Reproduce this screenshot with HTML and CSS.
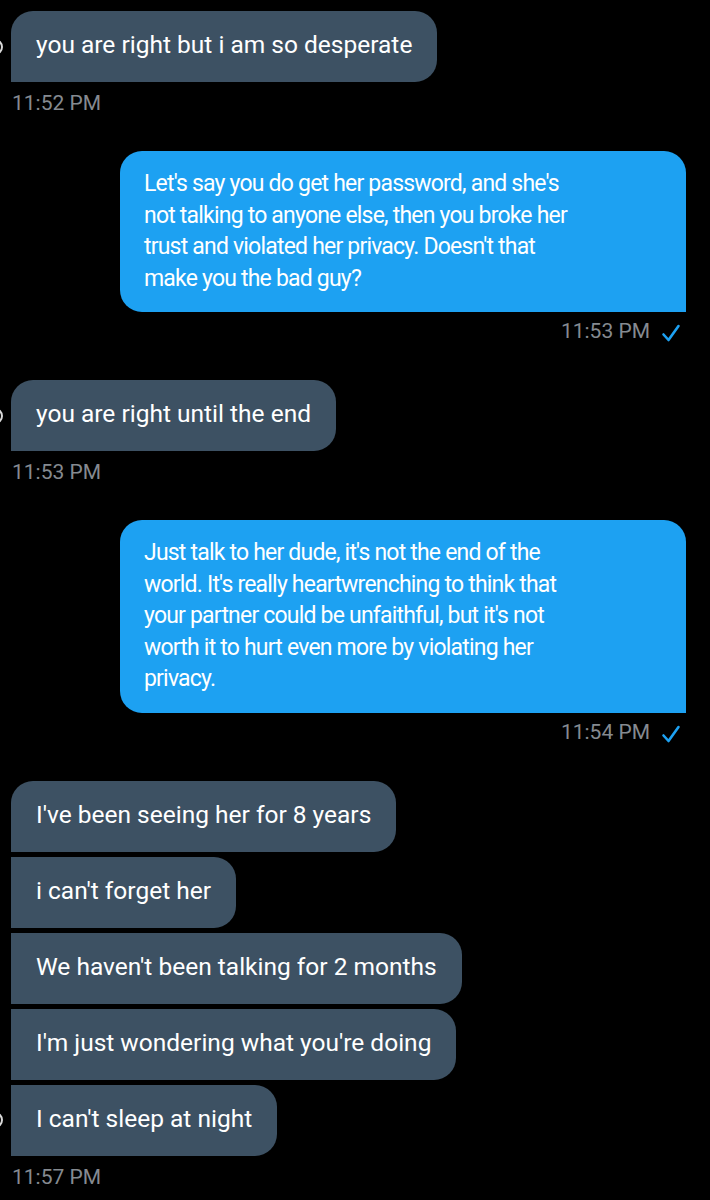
FILE: index.html
```html
<!DOCTYPE html>
<html lang="en">
<head>
<meta charset="utf-8">
<title>Messages</title>
<link rel="stylesheet" href="styles.css">
</head>
<body>
<main class="chat">
  <section class="group recv">
    <div class="row">
      <span class="avatar on"><span class="avatar-img"></span></span>
      <div class="bubble gray first last">you are right but i am so desperate</div>
    </div>
    <div class="time">11:52 PM</div>
  </section>

  <section class="group sent">
    <div class="row">
      <div class="bubble blue">Let's say you do get her password, and she's<br>not talking to anyone else, then you broke her<br>trust and violated her privacy. Doesn't that<br>make you the bad guy?</div>
    </div>
    <div class="time">11:53 PM
      <svg class="check" viewBox="0 0 20 20" width="20" height="20" aria-hidden="true"><path d="M2.5 11.5 L7.5 17 L17.5 3" fill="none" stroke="#1da1f2" stroke-width="2.6" stroke-linecap="round" stroke-linejoin="round"/></svg>
    </div>
  </section>

  <section class="group recv">
    <div class="row">
      <span class="avatar on"><span class="avatar-img"></span></span>
      <div class="bubble gray first last">you are right until the end</div>
    </div>
    <div class="time">11:53 PM</div>
  </section>

  <section class="group sent">
    <div class="row">
      <div class="bubble blue">Just talk to her dude, it's not the end of the<br>world. It's really heartwrenching to think that<br>your partner could be unfaithful, but it's not<br>worth it to hurt even more by violating her<br>privacy.</div>
    </div>
    <div class="time">11:54 PM
      <svg class="check" viewBox="0 0 20 20" width="20" height="20" aria-hidden="true"><path d="M2.5 11.5 L7.5 17 L17.5 3" fill="none" stroke="#1da1f2" stroke-width="2.6" stroke-linecap="round" stroke-linejoin="round"/></svg>
    </div>
  </section>

  <section class="group recv">
    <div class="row">
      <span class="avatar"></span>
      <div class="bubble gray first">I've been seeing her for 8 years</div>
    </div>
    <div class="row">
      <span class="avatar"></span>
      <div class="bubble gray">i can't forget her</div>
    </div>
    <div class="row">
      <span class="avatar"></span>
      <div class="bubble gray">We haven't been talking for 2 months</div>
    </div>
    <div class="row">
      <span class="avatar"></span>
      <div class="bubble gray">I'm just wondering what you're doing</div>
    </div>
    <div class="row">
      <span class="avatar on"><span class="avatar-img"></span></span>
      <div class="bubble gray last">I can't sleep at night</div>
    </div>
    <div class="time">11:57 PM</div>
  </section>
</main>
</body>
</html>
```

FILE: styles.css
```css
html, body {
  margin: 0;
  padding: 0;
  background: #000;
}

body {
  font-family: Roboto, "Noto Sans", sans-serif;
  color: #fff;
}

.chat {
  display: flex;
  flex-direction: column;
  padding: 11px 24px 0 0;
  gap: 36px;
}

.group {
  display: flex;
  flex-direction: column;
  gap: 5px;
}

.row {
  display: flex;
  align-items: center;
}

.sent .row {
  justify-content: flex-end;
}

.avatar {
  flex: none;
  width: 3px;
  height: 16px;
  margin-right: 8px;
  overflow: hidden;
}

.avatar-img {
  display: block;
  width: 16px;
  height: 16px;
  margin-left: -13px;
  box-sizing: border-box;
  border-radius: 50%;
  border: 2px solid #d8d8d8;
}

.gray {
  background: #3d5163;
  font-size: 24.5px;
  line-height: 32px;
  padding: 18px 25px 21px 25px;
  border-radius: 0 22px 22px 0;
  white-space: nowrap;
}

.gray.first {
  border-top-left-radius: 22px;
}

.blue {
  background: #1da1f2;
  width: 518px;
  font-size: 23px;
  line-height: 31.5px;
  padding: 17px 24px 18px 24px;
  border-radius: 22px 22px 0 22px;
  white-space: nowrap;
  letter-spacing: -0.8px;
}

.time {
  display: flex;
  align-items: center;
  height: 24px;
  margin-top: 4px;
  font-size: 21px;
  color: #858a90;
}

.recv .time {
  padding-left: 12px;
}

.sent .time {
  justify-content: flex-end;
  gap: 11px;
  margin-top: 2px;
  margin-bottom: 1px;
  padding-right: 5px;
}

.check {
  flex: none;
  margin-top: 4px;
}
```
